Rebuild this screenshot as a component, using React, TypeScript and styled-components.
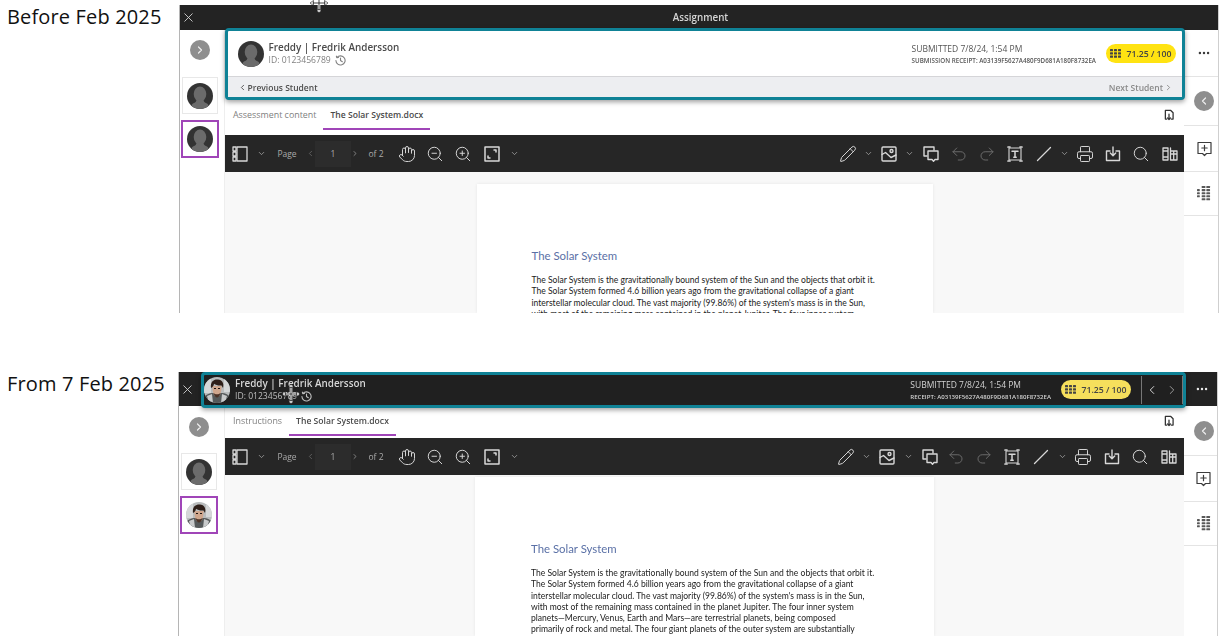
import React from "react";
import styled, { createGlobalStyle } from "styled-components";
import { X, ChevronLeft, ChevronRight, ChevronDown, Hand, ZoomIn, ZoomOut, Pencil, Undo2, Redo2, Printer, Search, Ellipsis } from "lucide-react";

type Variant = "before" | "after";

const Global = createGlobalStyle`
  html, body { margin: 0; padding: 0; background: #fff; }
  body { font-family: "Open Sans", "Liberation Sans", sans-serif; }
`;

const Page = styled.div`
  position: relative;
  width: 1222px;
  height: 636px;
  overflow: hidden;
  background: #fff;
`;
const Section = styled.section<{ $col: number; $top: number; $h: number }>`
  display: grid;
  grid-template-columns: ${(p) => p.$col}px 1040px;
  height: ${(p) => p.$h}px;
  margin-top: ${(p) => p.$top}px;
`;
const Label = styled.div`
  padding: 0 0 0 7px;
  font: 20px/24px "Open Sans", "Liberation Sans", sans-serif;
  letter-spacing: 0.15px;
  color: #111;
`;
const Frame = styled.div`
  display: flex;
  flex-direction: column;
  min-height: 0;
  overflow: hidden;
  border-left: 1px solid #b5b5b5;
  border-right: 1px solid #cfcfcf;
  filter: blur(0.4px);
`;
const TopBar = styled.header<{ $h: number }>`
  display: flex;
  align-items: center;
  flex: none;
  height: ${(p) => p.$h}px;
  background: #232323;
  color: #e6e6e6;
`;
const CloseSlot = styled.span`
  display: flex;
  justify-content: center;
  flex: none;
  width: 17px;
  margin-right: 5px;
  color: #d8d8d8;
`;
const BarTitle = styled.div`
  flex: 1;
  padding-right: 19px;
  text-align: center;
  font-size: 9.8px;
  font-weight: 600;
  color: #d5d5d5;
`;
const BarDots = styled.span`
  display: flex;
  justify-content: center;
  margin-left: auto;
  width: 32px;
  color: #e8e8e8;
`;
const Body = styled.div<{ $right: number }>`
  display: grid;
  grid-template-columns: 1fr 959px ${(p) => p.$right}px;
  flex: 1;
  min-height: 0;
`;
const Rail = styled.aside<{ $pad: number; $gap: number }>`
  display: flex;
  flex-direction: column;
  align-items: center;
  padding: ${(p) => p.$pad}px 5px 0 0;
  border-right: 1px solid #eee;
  > :nth-child(2) { margin-top: ${(p) => p.$gap}px; }
`;
const RoundBtn = styled.span`
  display: flex;
  align-items: center;
  justify-content: center;
  flex: none;
  width: 20px;
  height: 20px;
  border-radius: 50%;
  background: #8e8e8e;
  color: #eee;
`;
const Thumb = styled.div<{ $selected?: boolean }>`
  display: flex;
  align-items: center;
  justify-content: center;
  flex: none;
  box-sizing: border-box;
  width: ${(p) => (p.$selected ? 38 : 36)}px;
  height: ${(p) => (p.$selected ? 38 : 37)}px;
  margin-bottom: 6px;
  border: ${(p) => (p.$selected ? "2.5px solid #a045b8" : "1px solid #e8e8e8")};
`;
const Main = styled.main`
  display: flex;
  flex-direction: column;
  min-width: 0;
  min-height: 0;
`;
const Card = styled.div`
  position: relative;
  z-index: 2;
  display: flex;
  flex-direction: column;
  flex: none;
  box-sizing: border-box;
  width: 960px;
  height: 72px;
  margin-top: -2px;
  border: 3.5px solid #0f8296;
  border-radius: 4px;
  background: #fff;
  box-shadow: 0 2px 5px rgba(0, 0, 0, 0.38);
`;
const CardTop = styled.div`
  display: flex;
  align-items: center;
  flex: 1;
  padding: 0 6px 0 9.5px;
  color: #555;
`;
const CardBottom = styled.div`
  display: flex;
  align-items: center;
  justify-content: space-between;
  flex: none;
  height: 20px;
  padding: 0 9px 0 9.5px;
  border-top: 1px solid #d5d5d8;
  background: #edeef1;
  font-size: 8.5px;
  font-weight: 600;
  color: #555;
`;
const NavLink = styled.span<{ $muted?: boolean }>`
  display: flex;
  align-items: center;
  gap: 1px;
  color: ${(p) => (p.$muted ? "#8a8a8a" : "#4d4d4d")};
`;
const DarkCard = styled.div`
  display: flex;
  align-items: center;
  flex: none;
  box-sizing: border-box;
  width: 985px;
  height: 36px;
  padding: 0;
  border: 3.5px solid #0f8296;
  border-radius: 4px;
  background: #202020;
  box-shadow: 0 2px 5px rgba(0, 0, 0, 0.38);
  position: relative;
  z-index: 2;
  margin-top: 1px;
  color: #d2d2d2;
`;
const Who = styled.div<{ $gap: number }>`
  display: flex;
  flex-direction: column;
  justify-content: center;
  gap: ${(p) => p.$gap}px;
  margin-left: 5px;
`;
const Name = styled.div<{ $dark?: boolean }>`
  font-size: 9.9px;
  line-height: 12px;
  font-weight: 600;
  color: ${(p) => (p.$dark ? "#d6d6d6" : "#4a4a4a")};
`;
const StudentId = styled.div<{ $dark?: boolean }>`
  display: flex;
  align-items: center;
  gap: 4px;
  font-size: 8.6px;
  line-height: 11px;
  color: ${(p) => (p.$dark ? "#bdbdbd" : "#808080")};
`;
const Meta = styled.div<{ $gap: number }>`
  display: flex;
  flex-direction: column;
  gap: ${(p) => p.$gap}px;
  margin-left: auto;
`;
const Submitted = styled.div`
  font-size: 8.5px;
  line-height: 11px;
`;
const Receipt = styled.div<{ $size: number }>`
  font-size: ${(p) => p.$size}px;
  line-height: 8px;
  font-weight: 600;
`;
const Pill = styled.div<{ $soft?: boolean; $mx: number }>`
  display: flex;
  align-items: center;
  justify-content: center;
  gap: 5px;
  flex: none;
  width: 70px;
  height: 19px;
  margin: 0 ${(p) => p.$mx}px 0 10px;
  border-radius: 10px;
  background: ${(p) => (p.$soft ? "#f6df5c" : "#ffe312")};
  font-size: 8.7px;
  font-weight: 600;
  color: #444;
`;
const Pager = styled.div`
  display: flex;
  align-items: center;
  justify-content: space-between;
  box-sizing: border-box;
  flex: none;
  width: 42px;
  height: 28px;
  padding: 0 3px;
  border-left: 1px solid #777;
  border-right: 1px solid #777;
  color: #d5d5d5;
`;
const Tabs = styled.nav<{ $h: number }>`
  display: flex;
  align-items: flex-start;
  flex: none;
  height: ${(p) => p.$h}px;
  padding: 0 8px;
  background: #fff;
`;
const Tab = styled.span<{ $active?: boolean }>`
  box-sizing: border-box;
  height: 30px;
  padding: 0 ${(p) => (p.$active ? 7 : 0)}px;
  margin-right: ${(p) => (p.$active ? 0 : 7)}px;
  border-bottom: 2px solid ${(p) => (p.$active ? "#a045b8" : "transparent")};
  font-size: ${(p) => (p.$active ? 8.6 : 8.9)}px;
  line-height: 30px;
  font-weight: ${(p) => (p.$active ? 600 : 400)};
  color: ${(p) => (p.$active ? "#4a4a4a" : "#808080")};
  white-space: nowrap;
`;
const TabSave = styled.span`
  display: flex;
  align-items: center;
  height: 30px;
  margin: 0 2px 0 auto;
  color: #333;
`;
const Toolbar = styled.div`
  display: flex;
  align-items: center;
  justify-content: space-between;
  flex: none;
  height: 37px;
  background: #262626;
  color: #d8d8d8;
`;
const ToolGroup = styled.div`
  display: flex;
  align-items: center;
`;
const Tool = styled.span<{ $w: number; $dim?: boolean; $text?: boolean; $lit?: boolean }>`
  display: flex;
  align-items: center;
  justify-content: center;
  flex: none;
  width: ${(p) => p.$w}px;
  height: 26px;
  font-size: 8.5px;
  color: ${(p) => (p.$dim ? "#6c6c6c" : p.$text ? "#aaa" : "#d8d8d8")};
  background: ${(p) => (p.$lit ? "#2c2c2c" : "transparent")};
`;
const DocArea = styled.div<{ $pad: number }>`
  display: flex;
  justify-content: center;
  flex: 1;
  min-height: 0;
  overflow: hidden;
  padding-top: ${(p) => p.$pad}px;
  background: #f8f8f8;
`;
const Paper = styled.article<{ $w: number; $left: number }>`
  flex: none;
  box-sizing: border-box;
  width: ${(p) => p.$w}px;
  padding: 64px 0 0 ${(p) => p.$left}px;
  background: #fff;
  box-shadow: 0 0 3px rgba(0, 0, 0, 0.08);
`;
const DocTitle = styled.h1`
  margin: 0 0 11px;
  font: 400 11.4px/16px Lato, "Open Sans", sans-serif;
  color: #5a70a6;
`;
const DocLine = styled.p`
  margin: 0;
  font: 400 8.56px/11.3px Lato, "Open Sans", sans-serif;
  color: #222;
  white-space: nowrap;
`;
const SideRail = styled.aside`
  display: flex;
  flex-direction: column;
  background: #fff;
`;
const SideCell = styled.div<{ $h: number }>`
  display: flex;
  align-items: center;
  justify-content: center;
  flex: none;
  box-sizing: border-box;
  height: ${(p) => p.$h}px;
  padding-left: 6px;
  border-bottom: 1px solid #e4e4e4;
  color: #3c3c3c;
`;
const Cursor = styled.svg<{ $x: number; $y: number }>`
  position: absolute;
  left: ${(p) => p.$x - 10}px;
  top: ${(p) => p.$y - 11}px;
  width: 20px;
  height: 22px;
  z-index: 5;
`;

const Silhouette = ({ size }: { size: number }) => (
  <svg width={size} height={size} viewBox="0 0 26 26">
    <defs>
      <clipPath id="sil"><circle cx="13" cy="13" r="13" /></clipPath>
    </defs>
    <g clipPath="url(#sil)">
      <rect width="26" height="26" fill="#333" />
      <ellipse cx="13" cy="11" rx="6.3" ry="7.6" fill="#6b6b6b" />
      <path d="M9.5 16.5c0 2-1 3-3.5 4-1.500.7-2 3-2 6h18c0-3-.5-5.300-2-6-2.500-1-3.500-2-3.500-4z" fill="#6b6b6b" />
    </g>
  </svg>
);
const Freddy = ({ size, id }: { size: number; id: string }) => (
  <svg width={size} height={size} viewBox="0 0 26 26">
    <defs>
      <clipPath id={id}><circle cx="13" cy="13" r="13" /></clipPath>
    </defs>
    <g clipPath={`url(#${id})`}>
      <rect width="26" height="26" fill="#b9bcbd" />
      <path d="M0 0h7v16H0zM20 0h6v15h-6z" fill="#d5d7d8" />
      <path d="M0 26v-6c3-3 6-4 8-4h10c3 0 6 1.500 8 4v6z" fill="#55595a" />
      <path d="M3 19l5-2 1 9H5zM23 19l-5-2-1 9h4z" fill="#c8cacb" />
      <path d="M8.500 9c0 7 1.800 11 4.500 11s4.500-4 4.500-11z" fill="#cfa68d" />
      <path d="M9.500 16c1 3 2 4.500 3.500 4.500s2.500-1.500 3.500-4.500c-1 1-2 1.200-3.500 1.200S10.500 17 9.500 16z" fill="#4b3328" />
      <path d="M7 11C6 4.500 10 2 14 2.500c4 .3 6.300 3.500 5 8.500l-1.500-2.500c-3 .3-5.500-.3-7.500-1.700C9.700 9 8.800 10 7 11z" fill="#2e1f19" />
      <path d="M10 11.500h2M14 11.500h2" stroke="#1d1310" strokeWidth="1.100" />
    </g>
  </svg>
);
const s = { fill: "none", stroke: "currentColor", strokeWidth: 1.4, strokeLinecap: "round", strokeLinejoin: "round" } as const;
const Clock = () => (
  <svg width="11" height="11" viewBox="0 0 12 12" {...s} strokeWidth={1.200}>
    <path d="M2.200 2.700A5 5 0 1 1 1 6" /><path d="M1.500 1.300l.7 1.600 1.600-.2" /><path d="M6 3.200V6l2 1.300" />
  </svg>
);
const GradeGlyph = ({ c = "currentColor", w = 11, h = 9 }: { c?: string; w?: number; h?: number }) => (
  <svg width={w} height={h} viewBox="0 0 11 9" fill={c}>
    {[0, 3.300, 6.600].map((y) => [0, 4, 8].map((x) => (
      <rect key={`${x}-${y}`} x={x} y={y} width="3" height="2.200" rx=".5" />
    )))}
  </svg>
);
const GradeColumns = () => (
  <svg width="14" height="15" viewBox="0 0 15 16" fill="currentColor" opacity=".85">
    {[0, 3.300, 6.600, 9.900, 13].map((y) => [0, 5, 10].map((x) => (
      <rect key={`${x}-${y}`} x={x} y={y} width={x === 0 ? 3 : 4} height="2.200" rx=".6" opacity={x === 0 && (y < 3 || y > 11) ? 0 : 1} />
    )))}
  </svg>
);
const Save = () => (
  <svg width="10" height="12" viewBox="0 0 11 12" {...s}>
    <path d="M3 10.500H1.500v-9.500h6l2.500 2.500v7H8" /><path d="M5.500 5v6M3.800 9.200l1.700 1.800 1.700-1.800" />
  </svg>
);
const PlusComment = () => (
  <svg width="15" height="16" viewBox="0 0 15 16" {...s} strokeWidth={1.2}>
    <path d="M1 1.500h13v11H9.500l-2 2-2-2H1z" /><path d="M7.500 4.300v5.400M4.800 7h5.400" />
  </svg>
);
const PanelIcon = () => (
  <svg width="16" height="16" viewBox="0 0 16 16" {...s} strokeWidth={1.300}>
    <rect x="5" y="1" width="10" height="14" /><path d="M1 1h3v3.800H1zM1 6.100h3v3.800H1zM1 11.200h3V15H1z" />
  </svg>
);
const FitIcon = () => (
  <svg width="16" height="16" viewBox="0 0 16 16" {...s} strokeWidth={1.500}>
    <rect x="1" y="1" width="14" height="14" />
    <path d="M10 4h2v2M4 10v2h2" />
  </svg>
);
const ImageIcon = () => (
  <svg width="16" height="16" viewBox="0 0 16 16" {...s} strokeWidth={1.400}>
    <rect x="1" y="1" width="14" height="14" rx="1" />
    <circle cx="10.500" cy="5" r="1.500" /><path d="M1 8.500l3.500-2 5.500 5 5-2.500" />
  </svg>
);
const CopyComment = () => (
  <svg width="16" height="16" viewBox="0 0 16 16" {...s} strokeWidth={1.400}>
    <path d="M4 10H1V1h10v3" /><path d="M5 5h10v8.500h-3l-1.500 1.700L9 13.500H5z" />
  </svg>
);
const TextBox = () => (
  <svg width="16" height="16" viewBox="0 0 16 16" {...s} strokeWidth={1.100}>
    <rect x="2" y="2" width="12" height="12" />
    <path d="M5 5.200h6M8 5.200v6M6.800 11.200h2.400" strokeWidth={1.500} />
    <path d="M1 1h2M13 1h2M1 15h2M13 15h2" strokeWidth={1.700} />
  </svg>
);
const LineIcon = () => (
  <svg width="16" height="16" viewBox="0 0 16 16" {...s} strokeWidth={1.300}>
    <path d="M1.500 14.500l13-13" />
  </svg>
);
const TrayDown = () => (
  <svg width="16" height="16" viewBox="0 0 16 16" {...s} strokeWidth={1.400}>
    <path d="M5 5H1.500v9.500h13V5H11" /><path d="M8 1v8.500M5.300 7l2.700 2.800L10.700 7" />
  </svg>
);
const BookIcon = () => (
  <svg width="16" height="16" viewBox="0 0 16 16" {...s} strokeWidth={1.300}>
    <path d="M1 2h5v12H1zM8.500 5H15v9H8.500zM8.500 5V2M1 5h5M1 11h5M8.500 8H15M11.700 5v9" />
  </svg>
);
const MoveCursor = ({ x, y }: { x: number; y: number }) => (
  <Cursor $x={x} $y={y} viewBox="0 0 20 22">
    <path d="M10 2v18M2 11h16" stroke="#fff" strokeWidth="2.600" />
    <path d="M10 1L7.500 4.500h5zM10 21l-2.500-3.500h5zM1 11l3.500-2.500v5zM19 11l-3.500-2.500v5z" fill="#fff" stroke="#111" strokeWidth=".6" />
    <path d="M10 3.500v15M3.500 11h13" stroke="#111" strokeWidth=".8" />
  </Cursor>
);

const lines = [
  "The Solar System is the gravitationally bound system of the Sun and the objects that orbit it.",
  "The Solar System formed 4.6 billion years ago from the gravitational collapse of a giant",
  "interstellar molecular cloud. The vast majority (99.86%) of the system's mass is in the Sun,",
  "with most of the remaining mass contained in the planet Jupiter. The four inner system",
  "planets\u2014Mercury, Venus, Earth and Mars\u2014are terrestrial planets, being composed",
  "primarily of rock and metal. The four giant planets of the outer system are substantially",
];

const small = { size: 9, strokeWidth: 2 };
const big = { size: 18, strokeWidth: 1.3 };
const rightWidths: Record<Variant, number[]> = {
  before: [20, 20, 22, 18, 26, 30, 26, 30, 28, 12, 30, 26, 30, 28],
  after: [20, 20, 22, 20, 24, 28, 28, 28, 30, 12, 30, 28, 28, 30],
};

const ToolRow = ({ v }: { v: Variant }) => {
  const r = rightWidths[v];
  const chev = <ChevronDown {...small} />;
  return (
    <Toolbar>
      <ToolGroup>
        <Tool $w={30}><PanelIcon /></Tool>
        <Tool $w={12} $text>{chev}</Tool>
        <Tool $w={2} />
        <Tool $w={36} $text>Page</Tool>
        <Tool $w={10} $dim><ChevronLeft {...small} /></Tool>
        <Tool $w={36} $text $lit>1</Tool>
        <Tool $w={8} $text><ChevronRight {...small} /></Tool>
        <Tool $w={34} $text>of 2</Tool>
        <Tool $w={28}><Hand {...big} /></Tool>
        <Tool $w={28}><ZoomOut {...big} /></Tool>
        <Tool $w={28}><ZoomIn {...big} /></Tool>
        <Tool $w={30}><FitIcon /></Tool>
        <Tool $w={14} $text>{chev}</Tool>
      </ToolGroup>
      <ToolGroup>
        <Tool $w={r[0]}><Pencil {...big} /></Tool>
        <Tool $w={r[1]} $text>{chev}</Tool>
        <Tool $w={r[2]}><ImageIcon /></Tool>
        <Tool $w={r[3]} $text>{chev}</Tool>
        <Tool $w={r[4]}><CopyComment /></Tool>
        <Tool $w={r[5]} $dim><Undo2 {...big} /></Tool>
        <Tool $w={r[6]} $dim><Redo2 {...big} /></Tool>
        <Tool $w={r[7]}><TextBox /></Tool>
        <Tool $w={r[8]}><LineIcon /></Tool>
        <Tool $w={r[9]} $text>{chev}</Tool>
        <Tool $w={r[10]}><Printer {...big} /></Tool>
        <Tool $w={r[11]}><TrayDown /></Tool>
        <Tool $w={r[12]}><Search {...big} /></Tool>
        <Tool $w={r[13]}><BookIcon /></Tool>
      </ToolGroup>
    </Toolbar>
  );
};

const Document = ({ v }: { v: Variant }) => (
  <DocArea $pad={v === "before" ? 12 : 2}>
    <Paper $w={v === "before" ? 456 : 459} $left={v === "before" ? 55 : 56}>
      <DocTitle>The Solar System</DocTitle>
      {(v === "before" ? lines.slice(0, 4) : lines).map((l) => <DocLine key={l}>{l}</DocLine>)}
    </Paper>
  </DocArea>
);

const TabRow = ({ first, h }: { first: string; h: number }) => (
  <Tabs $h={h}>
    <Tab>{first}</Tab>
    <Tab $active>The Solar System.docx</Tab>
    <TabSave><Save /></TabSave>
  </Tabs>
);

export default function App() {
  return (
    <Page>
      <Global />
      <Section $col={179} $top={5} $h={308}>
        <Label>Before Feb 2025</Label>
        <Frame>
          <TopBar $h={25}>
            <CloseSlot><X size={15} strokeWidth={1.4} /></CloseSlot>
            <BarTitle>Assignment</BarTitle>
          </TopBar>
          <Body $right={34}>
            <Rail $pad={10} $gap={17}>
              <RoundBtn><ChevronRight size={12} strokeWidth={2.4} /></RoundBtn>
              <Thumb><Silhouette size={26} /></Thumb>
              <Thumb $selected><Silhouette size={26} /></Thumb>
            </Rail>
            <Main>
              <Card>
                <CardTop>
                  <Silhouette size={26} />
                  <Who $gap={2}>
                    <Name>Freddy | Fredrik Andersson</Name>
                    <StudentId>ID: 0123456789 <Clock /></StudentId>
                  </Who>
                  <Meta $gap={3}>
                    <Submitted>SUBMITTED 7/8/24, 1:54 PM</Submitted>
                    <Receipt $size={6.25}>SUBMISSION RECEIPT: A03139F5627A480F9D681A180F8732EA</Receipt>
                  </Meta>
                  <Pill $mx={0}><GradeGlyph />71.25 / 100</Pill>
                </CardTop>
                <CardBottom>
                  <NavLink><ChevronLeft size={9} strokeWidth={2.4} />Previous Student</NavLink>
                  <NavLink $muted>Next Student<ChevronRight size={9} strokeWidth={2.4} /></NavLink>
                </CardBottom>
              </Card>
              <TabRow first="Assessment content" h={35} />
              <ToolRow v="before" />
              <Document v="before" />
            </Main>
            <SideRail>
              <SideCell $h={47}><Ellipsis size={14} strokeWidth={2.200} /></SideCell>
              <SideCell $h={49}><RoundBtn><ChevronLeft size={12} strokeWidth={2.4} /></RoundBtn></SideCell>
              <SideCell $h={46}><PlusComment /></SideCell>
              <SideCell $h={44}><GradeColumns /></SideCell>
            </SideRail>
          </Body>
        </Frame>
      </Section>

      <Section $col={178} $top={59} $h={264}>
        <Label>From 7 Feb 2025</Label>
        <Frame>
          <TopBar $h={34}>
            <CloseSlot><X size={15} strokeWidth={1.4} /></CloseSlot>
            <DarkCard>
              <Freddy size={26} id="fa" />
              <Who $gap={2}>
                <Name $dark>Freddy | Fredrik Andersson</Name>
                <StudentId $dark>ID: 0123456789 <Clock /></StudentId>
              </Who>
              <Meta $gap={3}>
                <Submitted>SUBMITTED 7/8/24, 1:54 PM</Submitted>
                <Receipt $size={6.1}>RECEIPT: A03139F5627A480F9D681A180F8732EA</Receipt>
              </Meta>
              <Pill $soft $mx={10}><GradeGlyph />71.25 / 100</Pill>
              <Pager><ChevronLeft size={14} strokeWidth={1.7} /><ChevronRight size={14} strokeWidth={1.7} color="#999" /></Pager>
            </DarkCard>
            <BarDots><Ellipsis size={14} strokeWidth={2.200} /></BarDots>
          </TopBar>
          <Body $right={33}>
            <Rail $pad={11} $gap={16}>
              <RoundBtn><ChevronRight size={12} strokeWidth={2.4} /></RoundBtn>
              <Thumb><Silhouette size={26} /></Thumb>
              <Thumb $selected><Freddy size={26} id="fb" /></Thumb>
            </Rail>
            <Main>
              <TabRow first="Instructions" h={32} />
              <ToolRow v="after" />
              <Document v="after" />
            </Main>
            <SideRail>
              <SideCell $h={50}><RoundBtn><ChevronLeft size={12} strokeWidth={2.4} /></RoundBtn></SideCell>
              <SideCell $h={46}><PlusComment /></SideCell>
              <SideCell $h={44}><GradeColumns /></SideCell>
            </SideRail>
          </Body>
        </Frame>
      </Section>
      <MoveCursor x={319} y={3} />
      <MoveCursor x={291} y={394} />
    </Page>
  );
}
